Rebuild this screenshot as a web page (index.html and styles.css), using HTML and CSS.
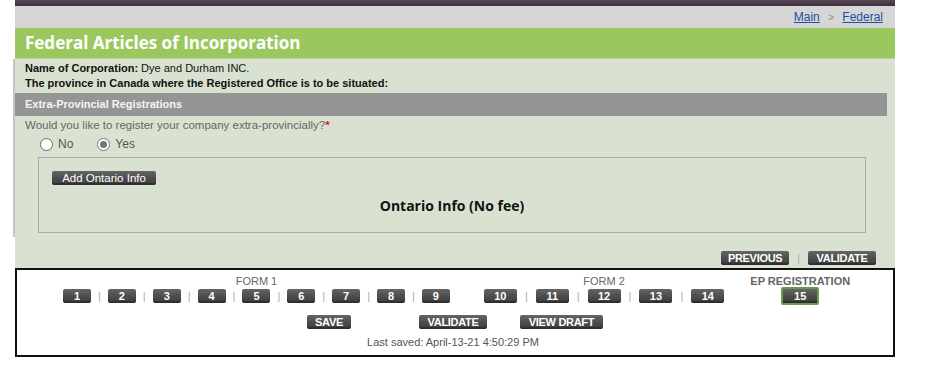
FILE: index.html
```html
<!DOCTYPE html>
<html lang="en">
<head>
    <meta charset="UTF-8">
    <title>Federal Articles of Incorporation</title>
    <link rel="stylesheet" href="styles.css">
</head>
<body>
    <div class="page">
        <div class="topbar"></div>
        <div class="crumbs">
            <a href="#">Main</a>
            <span class="arrow">&gt;</span>
            <a href="#">Federal</a>
        </div>

        <div class="title">Federal Articles of Incorporation</div>

        <div class="form-area">
            <div class="form-body">
                <p class="info"><b>Name of Corporation:</b> Dye and Durham INC.</p>
                <p class="info"><b>The province in Canada where the Registered Office is to be situated:</b></p>

                <div class="section-bar">Extra-Provincial Registrations</div>

                <p class="question">Would you like to register your company extra-provincially?<span class="req">*</span></p>
                <div class="radios">
                    <label><span class="radio"></span>No</label>
                    <label><span class="radio checked"></span>Yes</label>
                </div>

                <div class="ontario-box">
                    <button class="btn add">Add Ontario Info</button>
                    <div class="ontario-title">Ontario Info (No fee)</div>
                </div>
            </div>

            <div class="nav-buttons">
                <button class="btn caps">PREVIOUS</button>
                <span class="sep">|</span>
                <button class="btn caps">VALIDATE</button>
            </div>
        </div>

        <div class="steps">
            <div class="step-groups">
                <div class="group form1">
                    <div class="group-label">FORM 1</div>
                    <div class="group-btns">
                        <button class="btn num">1</button><span class="sep">|</span>
                        <button class="btn num">2</button><span class="sep">|</span>
                        <button class="btn num">3</button><span class="sep">|</span>
                        <button class="btn num">4</button><span class="sep">|</span>
                        <button class="btn num">5</button><span class="sep">|</span>
                        <button class="btn num">6</button><span class="sep">|</span>
                        <button class="btn num">7</button><span class="sep">|</span>
                        <button class="btn num">8</button><span class="sep">|</span>
                        <button class="btn num">9</button>
                    </div>
                </div>
                <div class="group form2">
                    <div class="group-label">FORM 2</div>
                    <div class="group-btns">
                        <button class="btn num wide">10</button><span class="sep">|</span>
                        <button class="btn num wide">11</button><span class="sep">|</span>
                        <button class="btn num wide">12</button><span class="sep">|</span>
                        <button class="btn num wide">13</button><span class="sep">|</span>
                        <button class="btn num wide">14</button>
                    </div>
                </div>
                <div class="group ep">
                    <div class="group-label">EP REGISTRATION</div>
                    <div class="group-btns">
                        <button class="btn num current">15</button>
                    </div>
                </div>
            </div>

            <div class="actions">
                <button class="btn caps">SAVE</button>
                <button class="btn caps">VALIDATE</button>
                <button class="btn caps">VIEW DRAFT</button>
            </div>
            <div class="saved">Last saved: April-13-21 4:50:29 PM</div>
        </div>
    </div>
</body>
</html>
```

FILE: styles.css
```css
* {
    box-sizing: border-box;
    margin: 0;
    padding: 0;
}

body {
    background: #fff;
    font-family: 'Liberation Sans', Arial, sans-serif;
    font-size: 11px;
    color: #222;
}

.page {
    width: 880px;
    margin-left: 15px;
}

.topbar {
    height: 6px;
    background: linear-gradient(#5a4656, #3d2f3b);
}

.crumbs {
    height: 22px;
    background: #d6d6d6;
    text-align: right;
    padding: 4px 12px 0 0;
    font-size: 12px;
}

.crumbs a {
    color: #1f4fa0;
}

.crumbs .arrow {
    color: #888;
    margin: 0 5px;
    font-size: 10px;
}

.title {
    height: 31px;
    background: #9bc85e;
    color: #fff;
    font-family: 'Open Sans', sans-serif;
    font-weight: bold;
    font-size: 17px;
    padding: 3px 0 0 10px;
    border-bottom: 1px solid #b8cfa8;
}

.form-area {
    background: #d9e2d0;
    padding-bottom: 1px;
}

.form-body {
    border-left: 2px solid #c4c4c4;
    margin-left: -2px;
    padding-top: 2px;
    padding-bottom: 4px;
}

.info {
    padding-left: 10px;
    line-height: 15px;
    color: #111;
}

.info b {
    font-weight: bold;
}

.section-bar {
    margin-top: 2px;
    height: 23px;
    width: 872px;
    background: #959595;
    color: #f4f4f4;
    font-weight: bold;
    padding: 5px 0 0 10px;
}

.question {
    color: #666;
    padding: 3px 0 0 10px;
    font-size: 11.5px;
}

.req {
    color: #e02020;
    font-weight: bold;
}

.radios {
    display: flex;
    gap: 24px;
    padding: 6px 0 0 25px;
    font-size: 12px;
    color: #555;
}

.radios label {
    display: flex;
    align-items: center;
    gap: 5px;
}

.radio {
    width: 13px;
    height: 13px;
    border: 1px solid #666;
    border-radius: 50%;
    background: #fff;
    display: inline-flex;
    align-items: center;
    justify-content: center;
}

.radio.checked {
    border-color: #777;
}

.radio.checked::after {
    content: "";
    width: 7px;
    height: 7px;
    border-radius: 50%;
    background: #777;
}

.ontario-box {
    margin: 6px 0 0 23px;
    width: 828px;
    height: 76px;
    border: 1px solid #aaa;
    padding: 13px 0 0 13px;
}

.btn.add {
    width: 104px;
    padding: 0;
    font-size: 11.5px;
}

.ontario-title {
    text-align: center;
    font-family: 'Open Sans', sans-serif;
    font-weight: bold;
    font-size: 14px;
    color: #111;
    margin-top: 11px;
    padding-right: 13px;
}

.btn {
    display: inline-block;
    background: linear-gradient(#666 0%, #4e4e4e 50%, #3c3c3c 100%);
    color: #fff;
    border: none;
    border-radius: 2px;
    font-family: 'Liberation Sans', Arial, sans-serif;
    font-size: 11px;
    height: 14px;
    line-height: 14px;
    padding: 0 10px;
    box-shadow: inset 0 -2px 0 rgba(0, 0, 0, 0.25);
}

.btn.caps {
    font-weight: bold;
    letter-spacing: -0.3px;
}

.sep {
    color: #aaa;
    font-size: 11px;
}

.nav-buttons {
    display: flex;
    justify-content: flex-end;
    align-items: center;
    gap: 8px;
    padding: 11px 19px 0 0;
    height: 30px;
}

.nav-buttons .btn {
    width: 68px;
    padding: 0;
}

.steps {
    border: 2px solid #111;
    height: 89px;
    background: #fff;
    padding-top: 4px;
}

.step-groups {
    display: flex;
    align-items: flex-start;
}

.group-label {
    color: #666;
    text-align: center;
    height: 15px;
    line-height: 15px;
}

.group-btns {
    display: flex;
    align-items: center;
    gap: 7px;
    margin-top: 0;
}

.btn.num {
    width: 28px;
    padding: 0;
    height: 14px;
    font-weight: bold;
}

.btn.num.wide {
    width: 33px;
}

.form1 {
    margin-left: 46px;
}

.form1 .group-btns {
    gap: 7px;
}

.form2 {
    margin-left: 34px;
}

.form2 .group-btns {
    gap: 8px;
}

.ep {
    margin-left: 26px;
}

.ep .group-label {
    font-weight: bold;
}

.ep .group-btns {
    justify-content: center;
    margin-top: -2px;
}

.btn.current {
    width: 38px;
    height: 18px;
    border: 2px solid #6b9a4f;
}

.actions {
    display: flex;
    align-items: center;
    margin: 10px 0 0 290px;
}

.actions .btn {
    height: 14px;
}

.actions .btn:nth-child(1) {
    width: 44px;
    padding: 0;
}

.actions .btn:nth-child(2) {
    width: 68px;
    padding: 0;
    margin-left: 68px;
}

.actions .btn:nth-child(3) {
    width: 83px;
    padding: 0;
    margin-left: 33px;
}

.saved {
    text-align: center;
    color: #555;
    margin-top: 7px;
    padding-right: 4px;
}
```
